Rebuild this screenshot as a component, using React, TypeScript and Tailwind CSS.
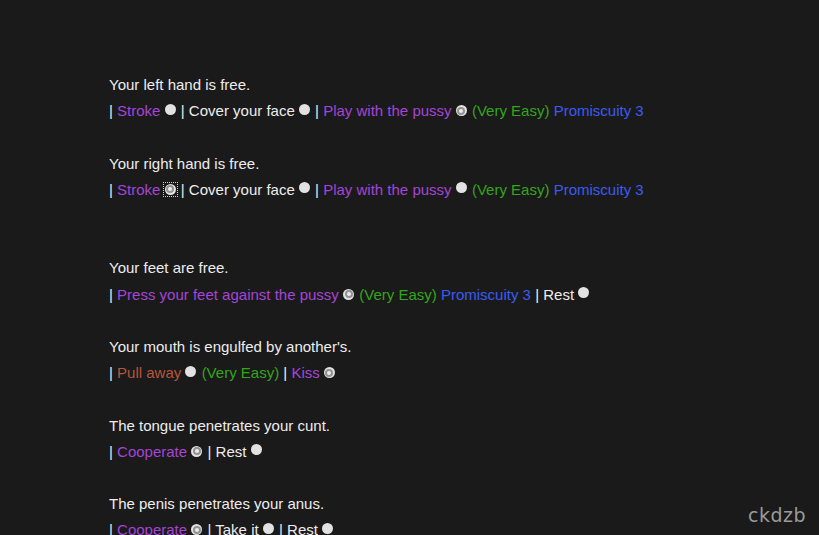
import React from 'react'

type Part =
  | { kind: 'sep' }
  | { kind: 'text'; text: string; color: string }
  | { kind: 'radio'; checked?: boolean; focus?: boolean }

const purple = 'text-[#a545d6]'
const green = 'text-[#35a51c]'
const blue = 'text-[#3a5cf2]'
const brown = 'text-[#b8553d]'
const white = 'text-[#ededed]'

const sep: Part = { kind: 'sep' }
const t = (text: string, color = white): Part => ({ kind: 'text', text, color })
const r = (checked = false, focus = false): Part => ({ kind: 'radio', checked, focus })

const blocks: { title: string; parts: Part[]; gapAfter: number }[] = [
  {
    title: 'Your left hand is free.',
    parts: [sep, t('Stroke', purple), r(), sep, t('Cover your face'), r(), sep, t('Play with the pussy', purple), r(true), t('(Very Easy)', green), t('Promiscuity 3', blue)],
    gapAfter: 1,
  },
  {
    title: 'Your right hand is free.',
    parts: [sep, t('Stroke', purple), r(true, true), sep, t('Cover your face'), r(), sep, t('Play with the pussy', purple), r(), t('(Very Easy)', green), t('Promiscuity 3', blue)],
    gapAfter: 2,
  },
  {
    title: 'Your feet are free.',
    parts: [sep, t('Press your feet against the pussy', purple), r(true), t('(Very Easy)', green), t('Promiscuity 3', blue), sep, t('Rest'), r()],
    gapAfter: 1,
  },
  {
    title: "Your mouth is engulfed by another's.",
    parts: [sep, t('Pull away', brown), r(), t('(Very Easy)', green), sep, t('Kiss', purple), r(true)],
    gapAfter: 1,
  },
  {
    title: 'The tongue penetrates your cunt.',
    parts: [sep, t('Cooperate', purple), r(true), sep, t('Rest'), r()],
    gapAfter: 1,
  },
  {
    title: 'The penis penetrates your anus.',
    parts: [sep, t('Cooperate', purple), r(true), sep, t('Take it'), r(), sep, t('Rest'), r()],
    gapAfter: 0,
  },
]

// radio inputs drawn by hand so the grey look of the original stays
function Radio({ checked, focus }: { checked?: boolean; focus?: boolean }) {
  return (
    <span className={`relative -top-[1.5px] inline-flex align-[0px] mr-[1px] ${focus ? 'outline outline-1 outline-dotted outline-[#cfcfcf] outline-offset-[1px]' : ''}`}>
      <span className="w-[11px] h-[11px] rounded-full bg-[#e2e2e2] flex items-center justify-center">
        {checked && (
          <span className="w-[8px] h-[8px] rounded-full border-[2px] border-[#939393] bg-[#ececec]" />
        )}
      </span>
    </span>
  )
}

function Line({ parts }: { parts: Part[] }) {
  return (
    <div className="whitespace-nowrap">
      {parts.map((p, i) => {
        if (p.kind === 'sep') return <span key={i} className={white}>| </span>
        if (p.kind === 'radio') return <React.Fragment key={i}><Radio checked={p.checked} focus={p.focus} /> </React.Fragment>
        return <span key={i} className={p.color}>{p.text} </span>
      })}
    </div>
  )
}

export default function App() {
  return (
    <div className="relative w-[819px] h-[535px] overflow-hidden bg-[#1a1a1a] text-[15px] leading-[26.2px] font-['Liberation_Sans',Arial,sans-serif]">
      <div className="pt-[72px] pl-[109px]">
        {blocks.map((b, i) => (
          <div key={i}>
            <div className={white}>{b.title}</div>
            <Line parts={b.parts} />
            {Array.from({ length: b.gapAfter }).map((_, k) => (
              <div key={k} className="h-[26.2px]" />
            ))}
          </div>
        ))}
      </div>
      <div className="absolute right-[13px] bottom-[7px] text-[19px] text-[#9a9a9a] font-['DejaVu_Sans',sans-serif] tracking-[0.5px]">
        ckdzb
      </div>
    </div>
  )
}
